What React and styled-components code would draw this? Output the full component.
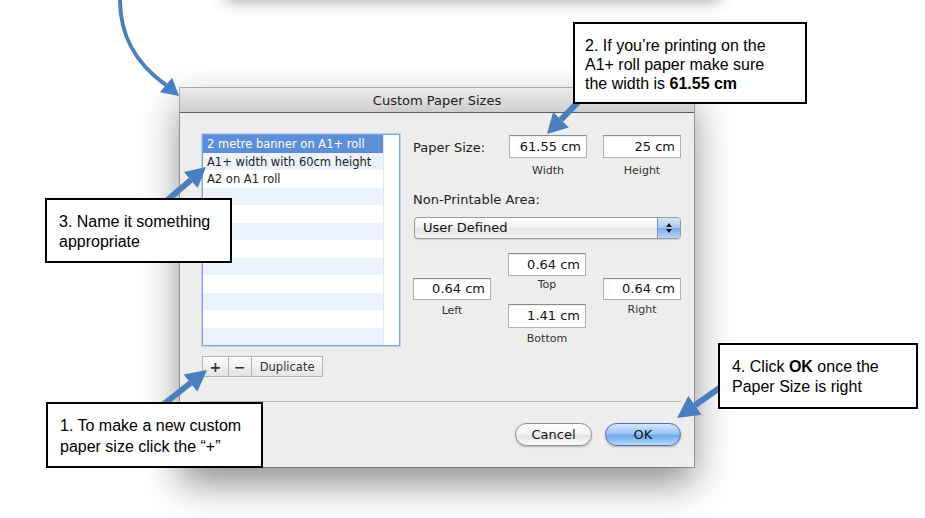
import React from "react";
import styled, { createGlobalStyle } from "styled-components";

const GlobalStyle = createGlobalStyle`
  html, body {
    margin: 0;
    padding: 0;
    background: #ffffff;
    overflow: hidden;
  }
`;

const Canvas = styled.div`
  position: relative;
  width: 925px;
  height: 518px;
  overflow: hidden;
  background: #ffffff;
  font-family: "DejaVu Sans", Verdana, sans-serif;
`;

// bottom edge of another window, mostly above the page
const WindowAbove = styled.div`
  width: 495px;
  height: 40px;
  margin: -43px 0 0 225px;
  background: #ffffff;
  box-shadow: 0 4px 16px rgba(0, 0, 0, 0.35);
`;

const Dialog = styled.div`
  width: 514px;
  height: 379px;
  margin: 91px 0 0 180px;
  display: flex;
  flex-direction: column;
  background: #ededed;
  box-shadow: 0 0 0 1px rgba(0, 0, 0, 0.28), 0 16px 36px rgba(0, 0, 0, 0.45);
`;

const TitleBar = styled.div`
  height: 24px;
  display: flex;
  align-items: center;
  justify-content: center;
  background: linear-gradient(#ececec, #cdcdcd);
  border-bottom: 1px solid #5e5e5e;
  font-size: 13px;
  color: #222;
`;

const Body = styled.div`
  flex: 1;
  display: flex;
  flex-direction: column;
  padding: 21px 13px 21px 20px;
`;

const Top = styled.div`
  display: flex;
  gap: 13px;
`;

const LeftCol = styled.div`
  display: flex;
  flex-direction: column;
  margin-left: 2px;
`;

const List = styled.div`
  width: 198px;
  height: 212px;
  box-sizing: border-box;
  border: 1px solid #7fa6dc;
  box-shadow: 0 0 0 1px #b9d0f1;
  background: #ffffff;
  display: flex;
`;

const Rows = styled.div`
  flex: 1;
  display: flex;
  flex-direction: column;
`;

const Row = styled.div`
  height: 17.5px;
  line-height: 19px;
  padding-left: 4px;
  font-size: 11.5px;
  white-space: nowrap;
  overflow: hidden;
  color: ${(p) => (p.$selected ? "#ffffff" : "#222")};
  background: ${(p) =>
    p.$selected ? "#5c8ed9" : p.$striped ? "#edf3fe" : "#ffffff"};
`;

const ScrollTrack = styled.div`
  width: 15px;
  background: #ffffff;
  border-left: 1px solid #e6e6e6;
`;

const SegBar = styled.div`
  display: flex;
  margin-top: 10px;
  height: 21px;
  width: 121px;
  box-sizing: border-box;
  border: 1px solid #b3b3b3;
  background: linear-gradient(#fdfdfd, #e4e4e4);
`;

const Seg = styled.div`
  width: ${(p) => p.$w}px;
  display: flex;
  align-items: center;
  justify-content: center;
  font-size: ${(p) => (p.$small ? 11.5 : 14)}px;
  font-weight: ${(p) => (p.$bold ? 700 : 400)};
  color: #333;
  border-left: ${(p) => (p.$first ? "none" : "1px solid #b3b3b3")};
`;

const RightCol = styled.div`
  width: 268px;
  display: flex;
  flex-direction: column;
  padding-top: 1px;
`;

const SizeRow = styled.div`
  display: flex;
  align-items: flex-start;
`;

const Label = styled.div`
  font-size: 13px;
  color: #222;
  line-height: 25px;
  width: ${(p) => (p.$w ? `${p.$w}px` : "auto")};
`;

const FieldCol = styled.div`
  width: 78px;
  display: flex;
  flex-direction: column;
  align-items: center;
  margin-left: ${(p) => p.$ml || 0}px;
  padding-top: ${(p) => p.$pt || 0}px;
`;

const Field = styled.div`
  width: 78px;
  height: ${(p) => p.$h || 23}px;
  margin-top: ${(p) => p.$mt || 0}px;
  box-sizing: border-box;
  background: #ffffff;
  border: 1px solid #b0b0b0;
  border-top-color: #8c8c8c;
  box-shadow: inset 0 1px 1px rgba(0, 0, 0, 0.08);
  font-size: 13px;
  color: #111;
  text-align: right;
  padding-right: 5px;
  line-height: ${(p) => (p.$h || 23) - 2}px;
`;

const SubLabel = styled.div`
  font-size: 11px;
  line-height: 14px;
  color: #333;
  margin-top: ${(p) => p.$mt || 5}px;
`;

const AreaLabel = styled.div`
  font-size: 13px;
  color: #222;
  line-height: 16px;
  margin-top: 14px;
`;

const Popup = styled.div`
  margin: 9px 0 0 1px;
  height: 22px;
  box-sizing: border-box;
  display: flex;
  border: 1px solid #9a9a9a;
  border-radius: 4px;
  background: linear-gradient(#ffffff, #f1f1f1 50%, #e4e4e4 51%, #f4f4f4);
  box-shadow: 0 1px 1px rgba(0, 0, 0, 0.12);
  overflow: hidden;
`;

const PopupText = styled.div`
  flex: 1;
  font-size: 13px;
  line-height: 20px;
  padding-left: 8px;
  color: #111;
`;

const Stepper = styled.div`
  width: 22px;
  border-left: 1px solid #7b8fc6;
  background: linear-gradient(#d6e5f9, #a9c7f0 50%, #7ea9e8 51%, #b9d6fa);
  display: flex;
  align-items: center;
  justify-content: center;
`;

const MarginGrid = styled.div`
  display: flex;
  justify-content: space-between;
  margin-top: 14px;
`;

const Separator = styled.div`
  height: 1px;
  margin-top: 24px;
  background: #b4b4b4;
`;

const Footer = styled.div`
  display: flex;
  justify-content: flex-end;
  gap: 13px;
  margin-top: 21px;
`;

const PillButton = styled.div`
  width: ${(p) => p.$w}px;
  height: 23px;
  box-sizing: border-box;
  border-radius: 12px;
  display: flex;
  align-items: center;
  justify-content: center;
  font-size: 13px;
  color: #111;
  border: 1px solid ${(p) => (p.$primary ? "#5b67b5" : "#8e8e8e")};
  background: ${(p) =>
    p.$primary
      ? "linear-gradient(#d3e6fb, #9cc6f3 45%, #6fa9ea 55%, #b3dafd)"
      : "linear-gradient(#ffffff, #f4f4f4 45%, #e2e2e2 55%, #fafafa)"};
  box-shadow: 0 1px 2px rgba(0, 0, 0, 0.25);
`;

const Overlay = styled.svg`
  position: absolute;
  left: 0;
  top: 0;
  pointer-events: none;
`;

const Callout = styled.div`
  position: absolute;
  box-sizing: border-box;
  background: #ffffff;
  border: 2px solid #000;
  font-family: "Liberation Sans", Arial, Helvetica, sans-serif;
  font-size: 16px;
  color: #000;
  white-space: nowrap;
  b {
    font-weight: 700;
  }
`;

const CalloutText = styled.div`
  line-height: ${(p) => p.$lh}px;
`;

const ARROW = "#4a7ebf";

const head = (bx, by, tx, ty, len = 20, wid = 22) => {
  const dx = tx - bx;
  const dy = ty - by;
  const d = Math.hypot(dx, dy);
  const ux = dx / d;
  const uy = dy / d;
  const cx = tx - ux * len;
  const cy = ty - uy * len;
  const px = -uy * (wid / 2);
  const py = ux * (wid / 2);
  return {
    base: [cx, cy],
    points: `${tx},${ty} ${cx + px},${cy + py} ${cx - px},${cy - py}`,
  };
};

const StraightArrow = ({ from, to, len, wid }) => {
  const h = head(from[0], from[1], to[0], to[1], len, wid);
  return (
    <g>
      <line
        x1={from[0]}
        y1={from[1]}
        x2={h.base[0]}
        y2={h.base[1]}
        stroke={ARROW}
        strokeWidth="6"
      />
      <polygon points={h.points} fill={ARROW} />
    </g>
  );
};

const Arrows = () => {
  const curved = head(166, 85, 179, 96, 17, 19);
  return (
    <Overlay width="925" height="518" viewBox="0 0 925 518">
      <path
        d={`M120 -4 C119 35 135 63 ${curved.base[0]} ${curved.base[1]}`}
        stroke={ARROW}
        strokeWidth="4"
        fill="none"
      />
      <polygon points={curved.points} fill={ARROW} />
      <StraightArrow from={[590, 90]} to={[547, 134]} len={20} wid={22} />
      <StraightArrow from={[150, 215]} to={[206, 167]} len={20} wid={21} />
      <StraightArrow from={[150, 415]} to={[207, 370]} len={21} wid={22} />
      <StraightArrow from={[735, 377]} to={[677, 418]} len={22} wid={23} />
    </Overlay>
  );
};

const sizes = [
  "2 metre banner on A1+ roll",
  "A1+ width with 60cm height",
  "A2 on A1 roll",
];

const App = () => {
  const rows = Array.from({ length: 12 }, (_, i) => sizes[i] || "");

  return (
    <Canvas>
      <GlobalStyle />
      <WindowAbove />
      <Dialog>
        <TitleBar>Custom Paper Sizes</TitleBar>
        <Body>
          <Top>
            <LeftCol>
              <List>
                <Rows>
                  {rows.map((name, i) => (
                    <Row key={i} $selected={i === 0} $striped={i % 2 === 1}>
                      {name}
                    </Row>
                  ))}
                </Rows>
                <ScrollTrack />
              </List>
              <SegBar>
                <Seg $w={25} $first $bold>
                  +
                </Seg>
                <Seg $w={23} $bold>
                  −
                </Seg>
                <Seg $w={71} $small>
                  Duplicate
                </Seg>
              </SegBar>
            </LeftCol>

            <RightCol>
              <SizeRow>
                <Label $w={96}>Paper Size:</Label>
                <FieldCol>
                  <Field>61.55 cm</Field>
                  <SubLabel $mt={6}>Width</SubLabel>
                </FieldCol>
                <FieldCol $ml={16}>
                  <Field>25 cm</Field>
                  <SubLabel $mt={6}>Height</SubLabel>
                </FieldCol>
              </SizeRow>

              <AreaLabel>Non-Printable Area:</AreaLabel>
              <Popup>
                <PopupText>User Defined</PopupText>
                <Stepper>
                  <svg width="8" height="12" viewBox="0 0 8 12">
                    <path d="M4 1 L7 5 L1 5 Z" fill="#1a1a1a" />
                    <path d="M4 11 L7 7 L1 7 Z" fill="#1a1a1a" />
                  </svg>
                </Stepper>
              </Popup>

              <MarginGrid>
                <FieldCol $pt={25}>
                  <Field $h={22}>0.64 cm</Field>
                  <SubLabel $mt={4}>Left</SubLabel>
                </FieldCol>
                <FieldCol>
                  <Field>0.64 cm</Field>
                  <SubLabel $mt={2}>Top</SubLabel>
                  <Field $mt={12} $h={24}>
                    1.41 cm
                  </Field>
                  <SubLabel $mt={4}>Bottom</SubLabel>
                </FieldCol>
                <FieldCol $pt={25}>
                  <Field $h={22}>0.64 cm</Field>
                  <SubLabel $mt={3}>Right</SubLabel>
                </FieldCol>
              </MarginGrid>
            </RightCol>
          </Top>

          <Separator />
          <Footer>
            <PillButton $w={77}>Cancel</PillButton>
            <PillButton $w={76} $primary>
              OK
            </PillButton>
          </Footer>
        </Body>
      </Dialog>

      <Arrows />

      <Callout style={{ left: 573, top: 22, width: 234, height: 82, padding: "12px 10px" }}>
        <CalloutText $lh={19}>
          2. If you’re printing on the
          <br />
          A1+ roll paper make sure
          <br />
          the width is <b>61.55 cm</b>
        </CalloutText>
      </Callout>

      <Callout style={{ left: 45, top: 198, width: 187, height: 65, padding: "12px 12px" }}>
        <CalloutText $lh={20}>
          3. Name it something
          <br />
          appropriate
        </CalloutText>
      </Callout>

      <Callout style={{ left: 46, top: 402, width: 217, height: 66, padding: "11px 12px" }}>
        <CalloutText $lh={21}>
          1. To make a new custom
          <br />
          paper size click the “+”
        </CalloutText>
      </Callout>

      <Callout style={{ left: 718, top: 343, width: 200, height: 66, padding: "12px 12px" }}>
        <CalloutText $lh={20}>
          4. Click <b>OK</b> once the
          <br />
          Paper Size is right
        </CalloutText>
      </Callout>
    </Canvas>
  );
};

export default App;
